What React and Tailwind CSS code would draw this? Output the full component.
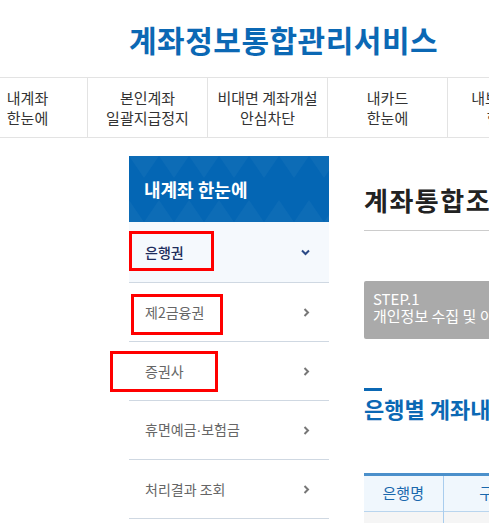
import React from "react";

const navItems = [
  ["내계좌", "한눈에"],
  ["본인계좌", "일괄지급정지"],
  ["비대면 계좌개설", "안심차단"],
  ["내카드", "한눈에"],
  ["내보험 조회", "한눈에"],
];

const menu = [
  { label: "은행권", active: true },
  { label: "제2금융권" },
  { label: "증권사" },
  { label: "휴면예금", label2: "보험금" },
  { label: "처리결과 조회" },
];

function ChevronDown() {
  return (
    <svg width="9" height="7" viewBox="0 0 9 7" fill="none">
      <path d="M1 1.5 L4.5 5 L8 1.5" stroke="#2b4a86" strokeWidth="2" />
    </svg>
  );
}

function ChevronRight() {
  return (
    <svg width="7" height="9" viewBox="0 0 7 9" fill="none">
      <path d="M1.5 1 L5 4.5 L1.5 8" stroke="#777" strokeWidth="2" />
    </svg>
  );
}

function HeaderPattern() {
  // faint triangle texture behind the sidebar title
  const tris = [];
  for (let i = 0; i < 8; i++) {
    tris.push(
      <polygon key={"a" + i} points={`${i * 30},0 ${i * 30 + 15},22 ${i * 30 + 30},0`} fill="#fff" opacity="0.04" />
    );
    tris.push(
      <polygon key={"b" + i} points={`${i * 30 - 15},66 ${i * 30},44 ${i * 30 + 15},66`} fill="#fff" opacity="0.04" />
    );
  }
  return (
    <svg className="absolute inset-0" width="200" height="66" viewBox="0 0 200 66">
      {tris}
    </svg>
  );
}

export default function App() {
  return (
    <div className="w-full h-[523px] overflow-hidden bg-white font-['Noto_Sans_CJK_KR','Noto_Sans',sans-serif] text-[#333]">
      <header className="h-[77px] flex items-center pl-[129px]">
        <h1 className="text-[30px] font-bold text-[#0b68b4] tracking-[0.5px] leading-none whitespace-nowrap">계좌정보통합관리서비스</h1>
      </header>

      <nav className="flex border-y border-[#e3e3e3] h-[61px] ml-[-32px]">
        {navItems.map((n, i) => (
          <div
            key={i}
            className="w-[120px] shrink-0 border-r border-[#e3e3e3] flex flex-col items-center justify-center text-[15px] leading-[20px] text-[#333] whitespace-nowrap"
          >
            <span>{n[0]}</span>
            <span>{n[1]}</span>
          </div>
        ))}
      </nav>

      <div className="flex pl-[129px] pt-[18px]">
        <aside className="w-[200px] shrink-0 relative">
          <div className="relative h-[66px] bg-[#0466b4] flex items-center pl-[15px] overflow-hidden">
            <HeaderPattern />
            <span className="relative text-white text-[18px] font-bold">내계좌 한눈에</span>
          </div>
          <ul>
            {menu.map((m, i) => (
              <li
                key={i}
                className={
                  "flex items-center justify-between pl-[16px] pr-[19px] border-b border-[#cfd8e2] " +
                  (i === 0 ? "h-[61px] bg-[#f5f9fd] text-[#1c2c5c] font-medium pr-[17px]" : "h-[59px] text-[#666]")
                }
              >
                <span className="text-[14px]">
                  {m.label}
                  {m.label2 && (
                    <>
                      <span className="font-['Liberation_Sans',sans-serif]">·</span>
                      {m.label2}
                    </>
                  )}
                </span>
                {m.active ? <ChevronDown /> : <ChevronRight />}
              </li>
            ))}
          </ul>

          {/* annotation boxes */}
          <div className="absolute left-0 top-[75px] w-[85px] h-[40px] border-[3px] border-[#ff0000]" />
          <div className="absolute left-[2px] top-[138px] w-[92px] h-[41px] border-[3px] border-[#ff0000]" />
          <div className="absolute left-[-19px] top-[195px] w-[108px] h-[41px] border-[3px] border-[#ff0000]" />
        </aside>

        <main className="ml-[35px] w-[900px] shrink-0">
          <h2 className="mt-[26px] text-[26px] font-bold text-[#222] leading-[36px] tracking-[1.5px]">계좌통합조회</h2>
          <div className="mt-[12px] h-[1px] bg-[#cccccc]" />

          <div className="mt-[50px] h-[58px] bg-[#aaaaaa] rounded-[2px] px-[9px] pt-[9px] text-white text-[15px] leading-[17px]">
            <p>STEP.1</p>
            <p>개인정보 수집 및 이용 동의</p>
          </div>

          <div className="mt-[49px] w-[18px] h-[3px] bg-[#0b68b4]" />
          <h3 className="mt-[2px] text-[22px] font-bold text-[#0b68b4] leading-[30px]">은행별 계좌내역 조회</h3>

          <table className="mt-[50px] border-t-[3px] border-[#4b90cb] border-collapse text-[15px]">
            <thead>
              <tr className="bg-[#f0f7fd] h-[37px] border-b border-[#b9d5ee]">
                <th className="w-[79px] font-normal text-[#1a68ad] border-r border-[#a9cdee]">은행명</th>
                <th className="w-[100px] font-normal text-[#1a68ad] border-r border-[#a9cdee]">구분</th>
                <th className="w-[140px] font-normal text-[#1a68ad]">계좌수</th>
              </tr>
            </thead>
            <tbody>
              <tr className="bg-[#f5f5f5] h-[37px]">
                <td className="border-r border-[#a9cdee]"></td>
                <td className="border-r border-[#a9cdee]"></td>
                <td></td>
              </tr>
            </tbody>
          </table>
        </main>
      </div>
    </div>
  );
}
